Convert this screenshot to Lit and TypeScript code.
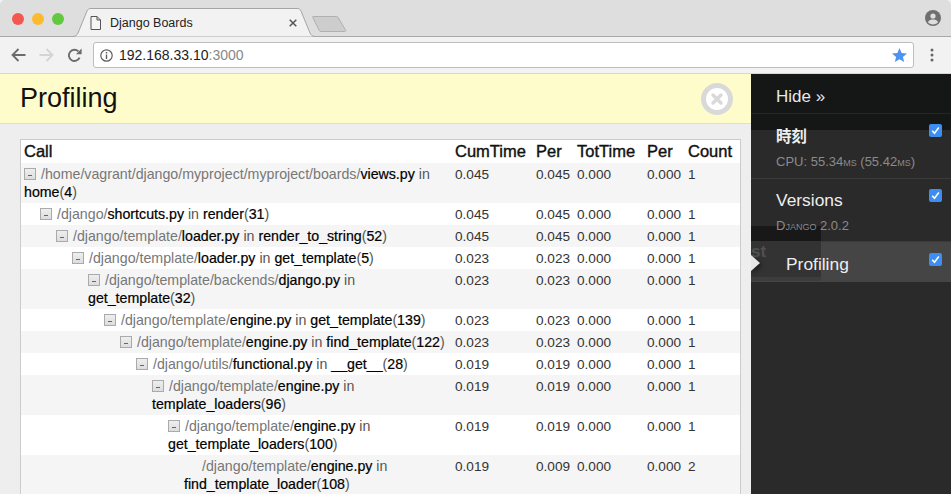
// Import Third-party Dependencies
import { LitElement, css, html } from "lit";
import { customElement } from "lit/decorators.js";

interface CallRow {
  depth: number;
  path: string;
  file: string;
  func: string;
  line: string;
  cum: string;
  per: string;
  tot: string;
  perTot: string;
  count: string;
  leaf?: boolean;
}

const rows: CallRow[] = [
  { depth: 0, path: "/home/vagrant/django/myproject/myproject/boards/", file: "views.py", func: "home", line: "4", cum: "0.045", per: "0.045", tot: "0.000", perTot: "0.000", count: "1" },
  { depth: 1, path: "/django/", file: "shortcuts.py", func: "render", line: "31", cum: "0.045", per: "0.045", tot: "0.000", perTot: "0.000", count: "1" },
  { depth: 2, path: "/django/template/", file: "loader.py", func: "render_to_string", line: "52", cum: "0.045", per: "0.045", tot: "0.000", perTot: "0.000", count: "1" },
  { depth: 3, path: "/django/template/", file: "loader.py", func: "get_template", line: "5", cum: "0.023", per: "0.023", tot: "0.000", perTot: "0.000", count: "1" },
  { depth: 4, path: "/django/template/backends/", file: "django.py", func: "get_template", line: "32", cum: "0.023", per: "0.023", tot: "0.000", perTot: "0.000", count: "1" },
  { depth: 5, path: "/django/template/", file: "engine.py", func: "get_template", line: "139", cum: "0.023", per: "0.023", tot: "0.000", perTot: "0.000", count: "1" },
  { depth: 6, path: "/django/template/", file: "engine.py", func: "find_template", line: "122", cum: "0.023", per: "0.023", tot: "0.000", perTot: "0.000", count: "1" },
  { depth: 7, path: "/django/utils/", file: "functional.py", func: "__get__", line: "28", cum: "0.019", per: "0.019", tot: "0.000", perTot: "0.000", count: "1" },
  { depth: 8, path: "/django/template/", file: "engine.py", func: "template_loaders", line: "96", cum: "0.019", per: "0.019", tot: "0.000", perTot: "0.000", count: "1" },
  { depth: 9, path: "/django/template/", file: "engine.py", func: "get_template_loaders", line: "100", cum: "0.019", per: "0.019", tot: "0.000", perTot: "0.000", count: "1" },
  { depth: 10, path: "/django/template/", file: "engine.py", func: "find_template_loader", line: "108", cum: "0.019", per: "0.009", tot: "0.000", perTot: "0.000", count: "2", leaf: true },
];

@customElement("app-root")
export class AppRoot extends LitElement {
  static styles = css`
    :host {
      display: flex;
      flex-direction: column;
      height: 100vh;
      overflow: hidden;
      font-family: "Liberation Sans", Arial, sans-serif;
      color: #111;
      background: #f2f2f2;
    }

    .tabbar {
      flex: none;
      height: 36px;
      display: flex;
      align-items: flex-end;
      background: #dedede;
      border-bottom: 1px solid #a8a8a8;
      border-radius: 5px 5px 0 0;
    }
    .lights {
      display: flex;
      gap: 8px;
      margin: 0 0 11px 12px;
      width: 60px;
      flex: none;
    }
    .lights span {
      width: 12px;
      height: 12px;
      border-radius: 50%;
    }
    .red { background: #f4574f; }
    .yellow { background: #fcbb2f; }
    .green { background: #62c83f; }

    .tab {
      position: relative;
      flex: none;
      width: 244px;
      height: 29px;
      margin-bottom: -1px;
      display: flex;
      align-items: center;
      font-size: 12.5px;
      color: #222;
    }
    .tab-shape {
      position: absolute;
      inset: 0;
    }
    .tab-icon {
      position: relative;
      margin-left: 18px;
    }
    .tab-title {
      position: relative;
      margin-left: 9px;
      flex: 1;
    }
    .tab-close {
      position: relative;
      margin-right: 19px;
    }
    .new-tab {
      flex: none;
      margin: 0 0 3px -4px;
    }
    .profile {
      flex: none;
      margin: 0 10px 10px auto;
    }

    .toolbar {
      flex: none;
      height: 36px;
      display: flex;
      align-items: center;
      background: #f2f2f2;
      border-bottom: 1px solid #d6d6d6;
    }
    .nav {
      flex: none;
      display: flex;
      align-items: center;
      width: 93px;
      gap: 13px;
      padding-left: 11px;
      box-sizing: border-box;
    }
    .url {
      flex: none;
      box-sizing: border-box;
      width: 821px;
      height: 26px;
      display: flex;
      align-items: center;
      background: #fff;
      border: 1px solid #bdbdbd;
      border-radius: 3px;
      font-size: 14px;
    }
    .url svg:first-child {
      margin: 0 6px 0 6px;
    }
    .host { color: #222; }
    .port { color: #888; }
    .star {
      margin-left: auto;
      margin-right: 6px;
    }
    .kebab {
      flex: none;
      margin-left: 16px;
    }

    .page {
      flex: 1;
      min-height: 0;
      display: flex;
    }
    .main {
      flex: none;
      width: 751px;
      background: #eee;
      overflow: hidden;
    }
    .banner {
      height: 49px;
      display: flex;
      align-items: center;
      justify-content: space-between;
      padding: 0 18px 0 20px;
      background: #fffccc;
      border-bottom: 1px solid #ddd;
    }
    .banner h3 {
      margin: 0;
      font-size: 27px;
      font-weight: 400;
      color: #111;
    }
    .content {
      padding: 15px 10px 0 20px;
    }
    table {
      width: 721px;
      table-layout: fixed;
      border-collapse: separate;
      border-spacing: 0;
      border: 1px solid #ccc;
      background: #fff;
      font-size: 13.6px;
      line-height: 18px;
    }
    th {
      text-align: left;
      font-size: 16.5px;
      font-weight: 400;
      -webkit-text-stroke: 0.4px #111;
      line-height: 19px;
      padding: 2px 0 2px 3px;
      color: #111;
    }
    td {
      vertical-align: top;
      padding: 3px 0 1px 3px;
      color: #333;
    }
    td.call {
      padding-top: 2px;
      padding-bottom: 2px;
      font-size: 14.2px;
    }
    tr.odd td { background: #f5f5f5; }
    .toggle {
      display: inline-block;
      box-sizing: border-box;
      width: 12px;
      height: 12px;
      margin-right: 5px;
      vertical-align: -1px;
      border: 1px solid #aaa;
      background: linear-gradient(#eee, #ddd);
    }
    .toggle::after {
      content: "";
      display: block;
      width: 4px;
      height: 1px;
      margin: 6px 0 0 3px;
      background: #666;
    }
    .spacer {
      display: inline-block;
      width: 18px;
    }
    .path { color: #777; }
    .strong {
      color: #000;
      -webkit-text-stroke: 0.2px #000;
    }
    .in { color: #555; }

    .sidebar {
      position: relative;
      flex: none;
      width: 200px;
      background: #2a2a2a;
      overflow: hidden;
    }
    .hide {
      height: 26px;
      padding: 13px 0 0 25px;
      background: #151616;
      border-bottom: 1px solid #262626;
      color: #e8e8e8;
      font-size: 17px;
      line-height: 20px;
    }
    .panel {
      position: relative;
      box-sizing: border-box;
      padding-left: 25px;
      border-bottom: 1px solid #3a3a3a;
      color: #eee;
    }
    .panel-time {
      height: 65px;
      padding-top: 11px;
      background: linear-gradient(#151616 16px, #2a2a2a 16px);
    }
    .panel-versions {
      height: 63px;
      padding-top: 11px;
    }
    .panel-profiling {
      height: 40px;
      padding: 12px 0 0 35px;
      border-bottom: 0;
      background: #454545;
    }
    .panel-name {
      position: relative;
      z-index: 1;
      font-size: 17.4px;
      line-height: 20px;
    }
    .panel-time .panel-name {
      font-family: "Noto Sans CJK JP", "Liberation Sans", sans-serif;
      font-size: 15.5px;
      font-weight: 700;
    }
    .panel-sub {
      position: relative;
      z-index: 1;
      margin-top: 8px;
      font-size: 13px;
      line-height: 16px;
      color: #8b8b8b;
      font-variant: small-caps;
    }
    .panel-time .panel-sub {
      margin-top: 9px;
    }
    .check {
      position: absolute;
      right: 9px;
      top: 10px;
      width: 13px;
      height: 13px;
      border-radius: 2px;
      background: #3c8ef0;
      display: flex;
      align-items: center;
      justify-content: center;
    }
    .panel-profiling .check { top: 11px; }
    .ghost {
      position: absolute;
      left: 0;
      top: 152px;
      width: 70px;
      height: 55px;
      background: linear-gradient(#181818 15px, #333 15px, #333 51px, #3d3d3d 51px);
      color: #505050;
      font-size: 17px;
      font-weight: 700;
      line-height: 18px;
    }
    .ghost span {
      position: absolute;
      left: 0;
      top: 17px;
    }
    .arrow {
      position: absolute;
      left: 0;
      top: 181px;
      width: 0;
      height: 0;
      border-style: solid;
      border-width: 8px 0 8px 9px;
      border-color: transparent transparent transparent #e6e6e6;
      filter: drop-shadow(2px 2px 2px rgba(0, 0, 0, 0.5));
    }
  `;

  renderRow(row: CallRow, index: number) {
    return html`
      <tr class=${index % 2 === 0 ? "odd" : "even"}>
        <td class="call" style="padding-left: ${3 + row.depth * 16}px">
          ${row.leaf ? html`<span class="spacer"></span>` : html`<span class="toggle"></span>`}<span class="path">${row.path}</span><span class="strong">${row.file}</span>
          <span class="in">in</span>
          <span class="strong">${row.func}</span><span class="in">(</span><span class="strong">${row.line}</span><span class="in">)</span>
        </td>
        <td>${row.cum}</td>
        <td>${row.per}</td>
        <td>${row.tot}</td>
        <td>${row.perTot}</td>
        <td>${row.count}</td>
      </tr>
    `;
  }

  renderCheck() {
    return html`
      <span class="check">
        <svg width="9" height="9" viewBox="0 0 9 9">
          <path d="M1.2 4.8 L3.5 7.2 L7.8 1.6" fill="none" stroke="#fff" stroke-width="1.6"></path>
        </svg>
      </span>
    `;
  }

  render() {
    return html`
      <div class="tabbar">
        <div class="lights">
          <span class="red"></span><span class="yellow"></span><span class="green"></span>
        </div>
        <div class="tab">
          <svg class="tab-shape" width="244" height="29" viewBox="0 0 244 29">
            <path d="M0.5 28.5 C4 28.5 5 27 6 25 L15 3 C16 1 17 0.5 19 0.5 L225 0.5 C227 0.5 228 1 229 3 L238 25 C239 27 240 28.5 243.5 28.5" fill="#f2f2f2" stroke="#a5a5a5"></path>
          </svg>
          <svg class="tab-icon" width="11" height="14" viewBox="0 0 11 14">
            <path d="M1 0.5 H7 L10.5 4 V13.5 H1 Z M7 0.5 V4 H10.5" fill="#f6f6f6" stroke="#555"></path>
          </svg>
          <span class="tab-title">Django Boards</span>
          <svg class="tab-close" width="8" height="8" viewBox="0 0 8 8">
            <path d="M0.7 0.7 L7.3 7.3 M7.3 0.7 L0.7 7.3" stroke="#555" stroke-width="1.5"></path>
          </svg>
        </div>
        <svg class="new-tab" width="35" height="18" viewBox="0 0 35 18">
          <path d="M1 1.5 H24 C25 1.5 26 2 26.5 3 L33.5 15 C34 16 33.5 16.5 32.5 16.5 H9 C8 16.5 7.5 16 7 15 L0.8 2.5 C0.5 2 0.5 1.5 1 1.5 Z" fill="#cdcdcd" stroke="#b0b0b0"></path>
        </svg>
        <svg class="profile" width="16" height="16" viewBox="0 0 16 16">
          <circle cx="8" cy="8" r="8" fill="#6f6f6f"></circle>
          <circle cx="8" cy="6" r="2.6" fill="#dedede"></circle>
          <path d="M3 12.2 C4 10 6 9.6 8 9.6 C10 9.6 12 10 13 12.2 C12 13.6 10 14.4 8 14.4 C6 14.4 4 13.6 3 12.2 Z" fill="#dedede"></path>
        </svg>
      </div>

      <div class="toolbar">
        <div class="nav">
          <svg width="15" height="14" viewBox="0 0 15 14">
            <path d="M14.5 7 H2 M7.5 1 L1.5 7 L7.5 13" fill="none" stroke="#6b6b6b" stroke-width="1.8"></path>
          </svg>
          <svg width="15" height="14" viewBox="0 0 15 14">
            <path d="M0.5 7 H13 M7.5 1 L13.5 7 L7.5 13" fill="none" stroke="#d4d4d4" stroke-width="1.8"></path>
          </svg>
          <svg width="15" height="15" viewBox="0 0 15 15">
            <path d="M12.6 9.6 A5.6 5.6 0 1 1 11.4 3.4" fill="none" stroke="#6b6b6b" stroke-width="1.9"></path>
            <path d="M9 6.2 H14.6 V0.6 Z" fill="#6b6b6b"></path>
          </svg>
        </div>
        <div class="url">
          <svg width="13" height="13" viewBox="0 0 13 13">
            <circle cx="6.5" cy="6.5" r="5.7" fill="none" stroke="#5f5f5f" stroke-width="1.2"></circle>
            <path d="M6.5 5.6 V10 M6.5 3 V4.4" stroke="#5f5f5f" stroke-width="1.4"></path>
          </svg>
          <span class="host">192.168.33.10</span><span class="port">:3000</span>
          <svg class="star" width="15" height="14" viewBox="0 0 15 14">
            <path d="M7.5 0 L9.6 5 L15 5.4 L10.9 8.9 L12.2 14 L7.5 11.2 L2.8 14 L4.1 8.9 L0 5.4 L5.4 5 Z" fill="#4d93f2"></path>
          </svg>
        </div>
        <svg class="kebab" width="4" height="14" viewBox="0 0 4 14">
          <circle cx="2" cy="2" r="1.5" fill="#666"></circle>
          <circle cx="2" cy="7" r="1.5" fill="#666"></circle>
          <circle cx="2" cy="12" r="1.5" fill="#666"></circle>
        </svg>
      </div>

      <div class="page">
        <div class="main">
          <div class="banner">
            <h3>Profiling</h3>
            <svg width="32" height="32" viewBox="0 0 32 32">
              <circle cx="16" cy="16" r="13.5" fill="#fff" stroke="#d9d9d9" stroke-width="5"></circle>
              <path d="M12 12 L20 20 M20 12 L12 20" stroke="#d9d9d9" stroke-width="3.4" stroke-linecap="round"></path>
            </svg>
          </div>
          <div class="content">
            <table>
              <colgroup>
                <col style="width: 431px" />
                <col style="width: 81px" />
                <col style="width: 41px" />
                <col style="width: 70px" />
                <col style="width: 41px" />
                <col />
              </colgroup>
              <thead>
                <tr>
                  <th>Call</th>
                  <th>CumTime</th>
                  <th>Per</th>
                  <th>TotTime</th>
                  <th>Per</th>
                  <th>Count</th>
                </tr>
              </thead>
              <tbody>
                ${rows.map((row, index) => this.renderRow(row, index))}
              </tbody>
            </table>
          </div>
        </div>

        <div class="sidebar">
          <div class="hide">Hide »</div>
          <div class="panel panel-time">
            <div class="panel-name">時刻</div>
            <div class="panel-sub">CPU: 55.34ms (55.42ms)</div>
            ${this.renderCheck()}
          </div>
          <div class="panel panel-versions">
            <div class="panel-name">Versions</div>
            <div class="panel-sub">Django 2.0.2</div>
            ${this.renderCheck()}
          </div>
          <div class="panel panel-profiling">
            <div class="panel-name">Profiling</div>
            ${this.renderCheck()}
          </div>
          <div class="ghost"><span>st</span></div>
          <div class="arrow"></div>
        </div>
      </div>
    `;
  }
}
